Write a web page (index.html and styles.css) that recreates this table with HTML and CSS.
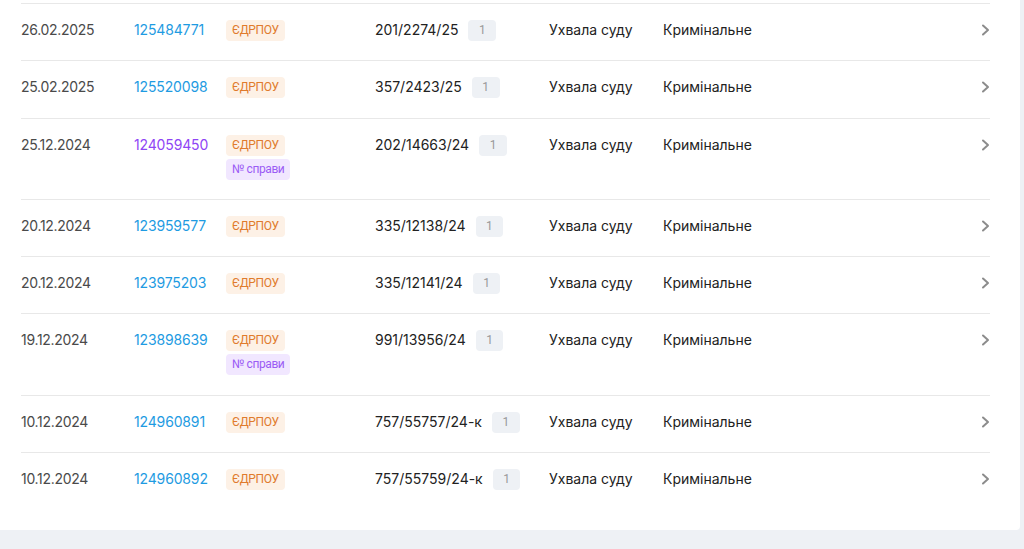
FILE: index.html
```html
<!DOCTYPE html>
<html lang="uk">
<head>
<meta charset="utf-8">
<link rel="stylesheet" href="styles.css">
</head>
<body>
<div class="card">
  <div class="row">
    <div class="date">26.02.2025</div>
    <div><a class="num">125484771</a></div>
    <div class="tags"><span class="tag edr">ЄДРПОУ</span></div>
    <div class="case"><span>201/2274/25</span><span class="cnt">1</span></div>
    <div class="txt">Ухвала суду</div>
    <div class="txt">Кримінальне</div>
    <div class="chev"><svg width="9" height="12" viewBox="0 0 9 12"><path d="M2 1.5 L7 6 L2 10.5" fill="none" stroke="#8c8c8c" stroke-width="2" stroke-linecap="round" stroke-linejoin="round"/></svg></div>
  </div>
  <div class="row">
    <div class="date">25.02.2025</div>
    <div><a class="num">125520098</a></div>
    <div class="tags"><span class="tag edr">ЄДРПОУ</span></div>
    <div class="case"><span>357/2423/25</span><span class="cnt">1</span></div>
    <div class="txt">Ухвала суду</div>
    <div class="txt">Кримінальне</div>
    <div class="chev"><svg width="9" height="12" viewBox="0 0 9 12"><path d="M2 1.5 L7 6 L2 10.5" fill="none" stroke="#8c8c8c" stroke-width="2" stroke-linecap="round" stroke-linejoin="round"/></svg></div>
  </div>
  <div class="row">
    <div class="date">25.12.2024</div>
    <div><a class="num visited">124059450</a></div>
    <div class="tags"><span class="tag edr">ЄДРПОУ</span><span class="tag case-tag">№ справи</span></div>
    <div class="case"><span>202/14663/24</span><span class="cnt">1</span></div>
    <div class="txt">Ухвала суду</div>
    <div class="txt">Кримінальне</div>
    <div class="chev"><svg width="9" height="12" viewBox="0 0 9 12"><path d="M2 1.5 L7 6 L2 10.5" fill="none" stroke="#8c8c8c" stroke-width="2" stroke-linecap="round" stroke-linejoin="round"/></svg></div>
  </div>
  <div class="row">
    <div class="date">20.12.2024</div>
    <div><a class="num">123959577</a></div>
    <div class="tags"><span class="tag edr">ЄДРПОУ</span></div>
    <div class="case"><span>335/12138/24</span><span class="cnt">1</span></div>
    <div class="txt">Ухвала суду</div>
    <div class="txt">Кримінальне</div>
    <div class="chev"><svg width="9" height="12" viewBox="0 0 9 12"><path d="M2 1.5 L7 6 L2 10.5" fill="none" stroke="#8c8c8c" stroke-width="2" stroke-linecap="round" stroke-linejoin="round"/></svg></div>
  </div>
  <div class="row">
    <div class="date">20.12.2024</div>
    <div><a class="num">123975203</a></div>
    <div class="tags"><span class="tag edr">ЄДРПОУ</span></div>
    <div class="case"><span>335/12141/24</span><span class="cnt">1</span></div>
    <div class="txt">Ухвала суду</div>
    <div class="txt">Кримінальне</div>
    <div class="chev"><svg width="9" height="12" viewBox="0 0 9 12"><path d="M2 1.5 L7 6 L2 10.5" fill="none" stroke="#8c8c8c" stroke-width="2" stroke-linecap="round" stroke-linejoin="round"/></svg></div>
  </div>
  <div class="row">
    <div class="date">19.12.2024</div>
    <div><a class="num">123898639</a></div>
    <div class="tags"><span class="tag edr">ЄДРПОУ</span><span class="tag case-tag">№ справи</span></div>
    <div class="case"><span>991/13956/24</span><span class="cnt">1</span></div>
    <div class="txt">Ухвала суду</div>
    <div class="txt">Кримінальне</div>
    <div class="chev"><svg width="9" height="12" viewBox="0 0 9 12"><path d="M2 1.5 L7 6 L2 10.5" fill="none" stroke="#8c8c8c" stroke-width="2" stroke-linecap="round" stroke-linejoin="round"/></svg></div>
  </div>
  <div class="row">
    <div class="date">10.12.2024</div>
    <div><a class="num">124960891</a></div>
    <div class="tags"><span class="tag edr">ЄДРПОУ</span></div>
    <div class="case"><span>757/55757/24-к</span><span class="cnt">1</span></div>
    <div class="txt">Ухвала суду</div>
    <div class="txt">Кримінальне</div>
    <div class="chev"><svg width="9" height="12" viewBox="0 0 9 12"><path d="M2 1.5 L7 6 L2 10.5" fill="none" stroke="#8c8c8c" stroke-width="2" stroke-linecap="round" stroke-linejoin="round"/></svg></div>
  </div>
  <div class="row">
    <div class="date">10.12.2024</div>
    <div><a class="num">124960892</a></div>
    <div class="tags"><span class="tag edr">ЄДРПОУ</span></div>
    <div class="case"><span>757/55759/24-к</span><span class="cnt">1</span></div>
    <div class="txt">Ухвала суду</div>
    <div class="txt">Кримінальне</div>
    <div class="chev"><svg width="9" height="12" viewBox="0 0 9 12"><path d="M2 1.5 L7 6 L2 10.5" fill="none" stroke="#8c8c8c" stroke-width="2" stroke-linecap="round" stroke-linejoin="round"/></svg></div>
  </div>
</div>
</body>
</html>
```
FILE: styles.css
```css
html, body {
  margin: 0;
  padding: 0;
  background: #eef1f5;
  font-family: Inter, "Noto Sans", sans-serif;
  font-size: 14px;
  color: #222;
}
.card {
  width: 1020px;
  background: #fff;
  padding: 3px 0 21px 0;
  box-sizing: border-box;
  border-bottom-right-radius: 4px;
}
.row {
  margin: 0 30px 0 21px;
  border-top: 1px solid #e8e8e8;
  padding: 16px 0 19.25px 0;
  display: grid;
  grid-template-columns: 113px 92px 149px 174px 114px 1fr 16px;
  align-items: start;
  line-height: 20px;
}
.date { color: #4a4a4a; letter-spacing: -0.3px; }
.num { color: #1e9be2; text-decoration: none; letter-spacing: -0.15px; }
.num.visited { color: #8f45f5; }
.tags {
  display: flex;
  flex-direction: column;
  align-items: flex-start;
  gap: 3px;
}
.tag {
  display: inline-block;
  height: 21px;
  line-height: 21px;
  padding: 0 6px;
  border-radius: 4px;
  font-family: Roboto, "Noto Sans", sans-serif;
  font-size: 12px;
  letter-spacing: -0.4px;
}
.edr { background: #fdf1e6; color: #e07b2c; }
.case-tag { background: #f1e7ff; color: #9b5cf5; }
.case {
  display: flex;
  align-items: flex-start;
  gap: 10px;
}
.cnt {
  display: inline-block;
  height: 21px;
  line-height: 21px;
  padding: 0 10.5px;
  border-radius: 4px;
  background: #eef1f5;
  color: #999;
  font-family: Roboto, "Noto Sans", sans-serif;
  font-size: 12px;
}
.chev {
  display: flex;
  justify-content: flex-end;
  padding-top: 4px;
}
.chev svg { display: block; }
```
